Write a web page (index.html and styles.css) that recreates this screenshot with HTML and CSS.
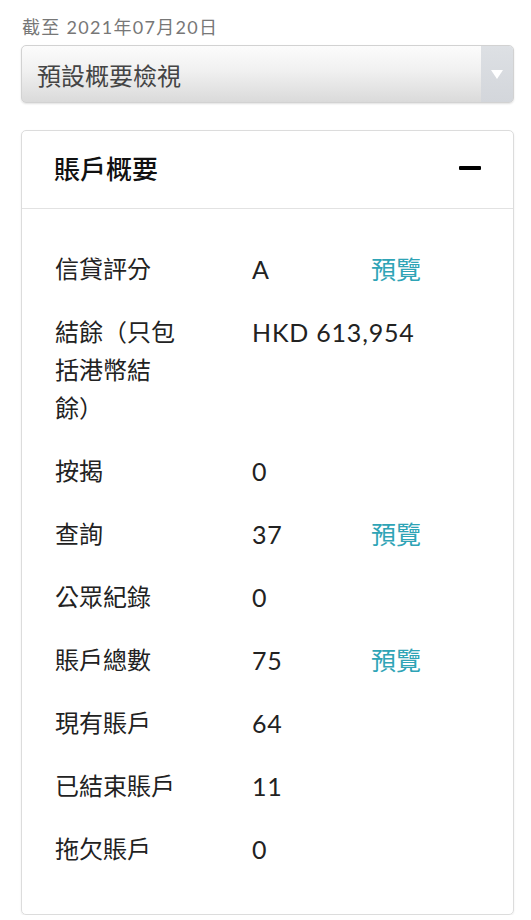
FILE: index.html
```html
<!DOCTYPE html>
<html lang="zh-Hant">
<head>
<meta charset="utf-8">
<title>賬戶概要</title>
<link rel="stylesheet" href="styles.css">
</head>
<body>
<div class="page">
  <div class="date">截至 2021年07月20日</div>
  <div class="select">
    <span class="select-text">預設概要檢視</span>
    <span class="select-arrow"><span class="tri"></span></span>
  </div>
  <section class="card">
    <header class="card-head">
      <h2 class="card-title">賬戶概要</h2>
      <span class="minus"></span>
    </header>
    <div class="rows">
      <div class="row"><div class="label">信貸評分</div><div class="value">A</div><a class="link">預覽</a></div>
      <div class="row"><div class="label">結餘（只包括港幣結餘）</div><div class="value">HKD 613,954</div><span></span></div>
      <div class="row"><div class="label">按揭</div><div class="value">0</div><span></span></div>
      <div class="row"><div class="label">查詢</div><div class="value">37</div><a class="link">預覽</a></div>
      <div class="row"><div class="label">公眾紀錄</div><div class="value">0</div><span></span></div>
      <div class="row"><div class="label">賬戶總數</div><div class="value">75</div><a class="link">預覽</a></div>
      <div class="row"><div class="label">現有賬戶</div><div class="value">64</div><span></span></div>
      <div class="row"><div class="label">已結束賬戶</div><div class="value">11</div><span></span></div>
      <div class="row"><div class="label">拖欠賬戶</div><div class="value">0</div><span></span></div>
    </div>
  </section>
</div>
</body>
</html>
```
FILE: styles.css
```css
* { box-sizing: border-box; }
html, body { margin: 0; padding: 0; background: #ffffff; }
body {
  font-family: Lato, "Noto Sans CJK TC", sans-serif;
  color: #222;
}
.page {
  width: 531px;
  padding: 14px 17px 0 21px;
}
.date {
  font-size: 18px;
  line-height: 26px;
  color: #777;
  padding-left: 1px;
  letter-spacing: 1.3px;
}
.select {
  margin-top: 5px;
  height: 58px;
  display: flex;
  align-items: stretch;
  border: 1px solid #d2d2d2;
  border-radius: 5px;
  background: linear-gradient(#fcfcfc, #f0f0f0 45%, #dadada);
  box-shadow: 0 1px 2px rgba(0,0,0,0.12);
  overflow: hidden;
}
.select-text {
  flex: 1;
  display: flex;
  align-items: center;
  padding-left: 15px;
  font-size: 24px;
  color: #444;
}
.select-arrow {
  width: 32px;
  display: flex;
  align-items: center;
  justify-content: center;
  background: linear-gradient(#dde0e4, #d3d6db);
}
.tri {
  width: 0;
  height: 0;
  border-left: 6px solid transparent;
  border-right: 6px solid transparent;
  border-top: 9px solid #ffffff;
}
.card {
  margin-top: 27px;
  border: 1px solid #dcdcdc;
  border-radius: 5px;
  box-shadow: 0 1px 2px rgba(0,0,0,0.08);
}
.card-head {
  height: 78px;
  display: flex;
  align-items: center;
  justify-content: space-between;
  padding: 0 32px 4px 32px;
  border-bottom: 1px solid #e2e2e2;
}
.card-title {
  margin: 0;
  font-size: 26px;
  font-weight: 500;
  color: #111;
}
.minus {
  width: 22px;
  height: 4px;
  background: #000;
  border-radius: 1px;
}
.rows {
  padding: 29px 0 33px 33px;
}
.row {
  display: grid;
  grid-template-columns: 197px 119px auto;
  padding: 12px 0 13px;
  font-size: 24px;
  line-height: 38px;
}
.label {
  width: 128px;
  color: #222;
  text-spacing-trim: space-all;
}
.value {
  font-size: 25px;
  letter-spacing: 0.8px;
  white-space: nowrap;
  color: #222;
}
.link {
  color: #2fa4b6;
  font-size: 25px;
}
```
